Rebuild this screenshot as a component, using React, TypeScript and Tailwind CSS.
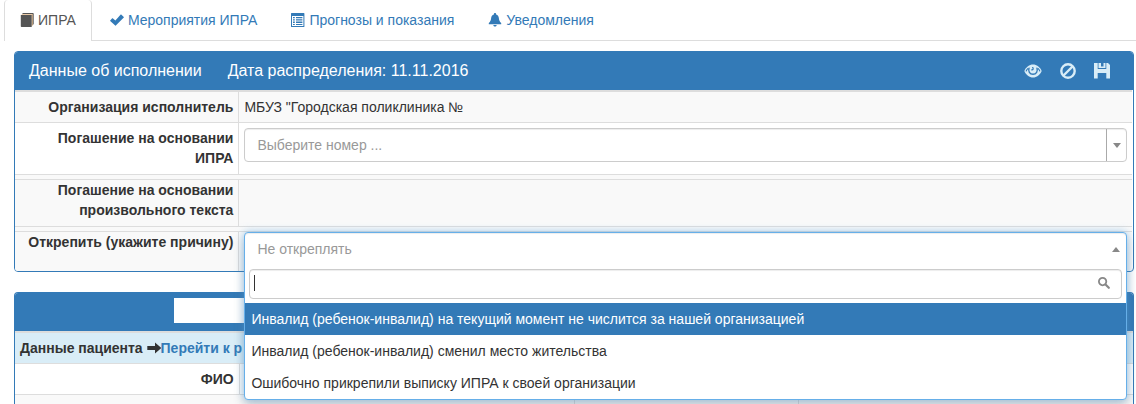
import React, { useState } from "react";

const BookIcon = () => (
  <svg viewBox="0 0 14 14" className="h-3.5 w-3.5" aria-hidden="true">
    <path fill="#e3b98a" d="M2 1.200h11V12l-1.400 1.400V2.200H1.400z" />
    <path fill="currentColor" d="M3 0h10a.7.7 0 0 1 .7.7V11l-1 1.200V1H2z" />
    <path fill="currentColor" d="M.8 2h10.900v12H1.600a.8.8 0 0 1-.8-.8z" />
  </svg>
);

const CheckIcon = () => (
  <svg viewBox="0 0 14 14" className="h-3.5 w-3.5" aria-hidden="true">
    <path fill="currentColor" d="M11.2 1.5l2.600 2.500a.4.4 0 0 1 0 .5l-8 8a.4.4 0 0 1-.6 0L.2 7.900a.4.4 0 0 1 0-.5l2-2.100a.4.4 0 0 1 .5 0l2.700 2.200 5.300-6a.4.4 0 0 1 .5 0z" />
  </svg>
);

const ListIcon = () => (
  <svg viewBox="0 0 14 14" className="h-3.5 w-3.5" aria-hidden="true">
    <path fill="currentColor" fillRule="evenodd" d="M.6 0h12.2a.6.6 0 0 1 .6.6v12.8a.6.6 0 0 1-.6.6H.6a.6.6 0 0 1-.6-.6V.6A.6.6 0 0 1 .6 0zM1 3v10h11.4V3z" />
    <path fill="currentColor" d="M2 4h1.8v1.3H2zM5 4h6.4v1.3H5zM2 6.3h1.8v1.3H2zM5 6.3h6.4v1.3H5zM2 8.6h1.8v1.3H2zM5 8.6h6.4v1.3H5zM2 10.9h1.8v1.2H2zM5 10.9h6.4v1.2H5z" />
  </svg>
);

const BellIcon = () => (
  <svg viewBox="0 0 14 14" className="h-3.5 w-3.5" aria-hidden="true">
    <path fill="currentColor" d="M7 0c.7 0 1.1.5 1.1 1.100v.3c1.700.5 2.500 1.700 2.700 3.300.3 2.500.8 4 2.400 5.300v1.300H.8V10c1.600-1.300 2.100-2.800 2.400-5.300C3.400 3.100 4.200 1.900 5.900 1.400v-.3C5.900.5 6.300 0 7 0zM5.300 12h3.400C8.500 13 7.900 13.600 7 13.600S5.500 13 5.300 12z" />
  </svg>
);

const EyeIcon = () => (
  <svg viewBox="0 0 18 16" className="h-4 w-[18px]" aria-hidden="true">
    <path fill="currentColor" d="M9 1.500c3.700 0 6.900 2.600 8.700 6.500-1.800 3.900-5 6.500-8.700 6.500S2.100 11.900.3 8C2.100 4.100 5.300 1.500 9 1.500z" />
    <g fill="none" stroke="#337ab7" strokeLinecap="round">
      <path strokeWidth="1.400" d="M5 5.200c-1 2.900.6 6 4 6s5-3.100 4-6" />
      <path strokeWidth="1.100" d="M3.800 5.600C3 6.400 2.500 7.200 2.200 8M14.200 5.600c.8.8 1.300 1.600 1.600 2.400" />
      <path strokeWidth="1.200" d="M8.600 4.600c1 .6.8 2.300-.9 2.200" />
    </g>
  </svg>
);

const BanIcon = () => (
  <svg viewBox="0 0 16 16" className="h-4 w-4" aria-hidden="true">
    <circle cx="8" cy="8" r="6.700" fill="none" stroke="currentColor" strokeWidth="2.400" />
    <path stroke="currentColor" strokeWidth="2.400" d="M3.500 12.500l9-9" />
  </svg>
);

const SaveIcon = () => (
  <svg viewBox="0 0 16 16" className="h-4 w-4" aria-hidden="true">
    <path fill="currentColor" fillRule="evenodd" d="M0 0h3.700v6h8.600V0H14l2 2v13.500h-3.700V10H3.700v5.500H0zM9.500 0h2v5h-7V0H7v3.500h2.500z" />
  </svg>
);

const SearchIcon = () => (
  <svg viewBox="0 0 12 12" className="h-3 w-3" aria-hidden="true">
    <circle cx="4.600" cy="4.600" r="3.700" fill="none" stroke="currentColor" strokeWidth="1.800" />
    <path stroke="currentColor" strokeWidth="2.200" strokeLinecap="round" d="M7.800 7.800l3 3" />
  </svg>
);

const ArrowIcon = () => (
  <svg viewBox="0 0 14 12" className="h-3 w-3.5" aria-hidden="true">
    <path fill="currentColor" d="M8 .4l5.800 5.200a.5.5 0 0 1 0 .8L8 11.600V8H.3V4H8z" />
  </svg>
);

const Caret = ({ up }: { up?: boolean }) => (
  <svg viewBox="0 0 8 5" className="h-[5px] w-2 text-[#888]" aria-hidden="true">
    <path fill="currentColor" d={up ? "M0 5l4-5 4 5z" : "M0 0h8L4 5z"} />
  </svg>
);

const tabs = [
  { id: "ipra", title: "ИПРА", icon: <BookIcon /> },
  { id: "events", title: "Мероприятия ИПРА", icon: <CheckIcon /> },
  { id: "forecast", title: "Прогнозы и показания", icon: <ListIcon /> },
  { id: "notices", title: "Уведомления", icon: <BellIcon /> },
];

const reasons = [
  "Инвалид (ребенок-инвалид) на текущий момент не числится за нашей организацией",
  "Инвалид (ребенок-инвалид) сменил место жительства",
  "Ошибочно прикрепили выписку ИПРА к своей организации",
];

const labelCell = "w-1/5 px-[5px] text-right align-top font-bold";
const valueCell = "border-l border-[#ddd] px-[5px] align-top";

const ReasonSelect = () => {
  const [open, setOpen] = useState(true);
  const [value, setValue] = useState("");
  const [search, setSearch] = useState("");
  const [active, setActive] = useState(0);

  const found = reasons.filter((r) => r.toLowerCase().includes(search.toLowerCase()));

  return (
    <div className="relative h-[39px]">
      <div className="absolute inset-x-0 top-0 z-10 rounded border border-[#66afe9] bg-white shadow-[0_0_8px_rgba(102,175,233,0.6),0_6px_12px_rgba(0,0,0,0.175)]">
        <button
          id="reason"
          type="button"
          aria-expanded={open}
          onClick={() => setOpen(!open)}
          className="flex h-8 w-full items-center justify-between rounded-t pr-1.5 pl-3 text-left text-[#999] shadow-[inset_0_1px_1px_rgba(0,0,0,0.075)]"
        >
          {value || "Не откреплять"}
          <Caret up={open} />
        </button>
        {open && (
          <div>
            <div className="relative px-1 py-1">
              <input
                type="text"
                aria-label="Поиск"
                value={search}
                onChange={(e) => setSearch(e.target.value)}
                className="block h-[30px] w-full rounded border border-[#ccc] pr-8 pl-1 caret-transparent shadow-[inset_0_1px_1px_rgba(0,0,0,0.075)] outline-none"
              />
              {search === "" && <span className="absolute top-2.5 left-[9px] h-4 w-px bg-[#333]" />}
              <span className="absolute top-3 right-4 text-[#888]">
                <SearchIcon />
              </span>
            </div>
            <ul role="listbox" aria-label="Причина">
              {found.map((r, i) => (
                <li
                  key={r}
                  role="option"
                  aria-selected={i === active}
                  onMouseEnter={() => setActive(i)}
                  onClick={() => {
                    setValue(r);
                    setOpen(false);
                  }}
                  className={`cursor-pointer px-1.5 py-1.5 last:rounded-b ${i === active ? "bg-[#337ab7] text-white" : ""}`}
                >
                  {r}
                </li>
              ))}
            </ul>
          </div>
        )}
      </div>
    </div>
  );
};

const App = () => {
  const [tab, setTab] = useState("ipra");
  const [number, setNumber] = useState("");

  return (
    <div className="bg-white font-['Liberation_Sans',Arial,sans-serif] text-sm leading-5 text-[#333]">
      <nav className="ml-1 flex gap-0.5 border-b border-[#ddd]">
        {tabs.map((t) => (
          <a
            key={t.id}
            href={`#${t.id}`}
            onClick={() => setTab(t.id)}
            className={`-mb-px flex items-center gap-1 border-x px-[15px] pt-2.5 pb-[11px] ${
              t.id === tab ? "rounded-t border-[#ddd] bg-white text-[#555]" : "border-transparent text-[#337ab7]"
            }`}
          >
            {t.icon}
            {t.title}
          </a>
        ))}
      </nav>

      <main className="flex flex-col gap-5 pt-2.5 pr-0.5 pl-3.5">
        <section className="rounded border border-[#337ab7]">
          <header className="flex h-[38px] items-center justify-between rounded-t-[3px] bg-[#337ab7] pr-[23px] pl-3.5 text-base text-white">
            <div className="flex gap-[26px]">
              <h2>Данные об исполнении</h2>
              <span>Дата распределения: 11.11.2016</span>
            </div>
            <div className="flex gap-[18px] text-[#d9edf7]">
              <button type="button" aria-label="Просмотр">
                <EyeIcon />
              </button>
              <button type="button" aria-label="Отменить">
                <BanIcon />
              </button>
              <button type="button" aria-label="Сохранить">
                <SaveIcon />
              </button>
            </div>
          </header>
          <div className="pr-px">
            <table className="w-full table-fixed border-separate border-spacing-0 border-t-2 border-[#ddd]">
              <tbody>
                <tr className="bg-[#f9f9f9]">
                  <th scope="row" className={`${labelCell} py-[5px]`}>Организация исполнитель</th>
                  <td className={`${valueCell} py-[5px]`}>МБУЗ "Городская поликлиника №</td>
                </tr>
                <tr>
                  <th scope="row" className={`${labelCell} border-t border-[#ddd] pt-[5px] pb-1.5`}>
                    <label htmlFor="number">Погашение на основании ИПРА</label>
                  </th>
                  <td className={`${valueCell} border-t pt-[5px]`}>
                    <div className="relative">
                      <select
                        id="number"
                        value={number}
                        onChange={(e) => setNumber(e.target.value)}
                        className="block h-[34px] w-full appearance-none rounded border border-[#ccc] bg-white px-3 text-[#999] shadow-[inset_0_1px_1px_rgba(0,0,0,0.075)]"
                      >
                        <option value="">Выберите номер ...</option>
                      </select>
                      <span className="pointer-events-none absolute inset-y-px right-px flex w-5 items-center justify-center border-l border-[#aaa]">
                        <Caret />
                      </span>
                    </div>
                  </td>
                </tr>
                <tr className="bg-[#f9f9f9]">
                  <td colSpan={2} className="h-[5px] border-t border-[#ddd] p-0" />
                </tr>
                <tr className="bg-[#f9f9f9]">
                  <th scope="row" className={`${labelCell} border-t border-[#ddd] pb-1.5`}>
                    Погашение на основании произвольного текста
                  </th>
                  <td className={`${valueCell} border-t`} />
                </tr>
                <tr className="bg-[#f9f9f9]">
                  <td colSpan={2} className="h-[5px] border-t border-[#ddd] p-0" />
                </tr>
                <tr>
                  <th scope="row" className={`${labelCell} rounded-bl-[3px] border-t border-[#ddd] bg-[#f9f9f9] whitespace-nowrap`}>
                    <label htmlFor="reason">Открепить (укажите причину)</label>
                  </th>
                  <td className={`${valueCell} rounded-br-[3px] border-t bg-[#f9f9f9]`}>
                    <ReasonSelect />
                  </td>
                </tr>
              </tbody>
            </table>
          </div>
        </section>

        <section className="rounded-t border border-b-0 border-[#337ab7]">
          <header className="flex h-[38px] items-start rounded-t-[3px] bg-[#337ab7] pt-[5px]">
            <div className="ml-[159px] h-[25px] w-60 bg-white" />
          </header>
          <table className="w-full table-fixed border-separate border-spacing-0 border-t-2 border-[#ddd]">
            <colgroup>
              <col className="w-[20%]" />
              <col className="w-[30%]" />
              <col className="w-[20%]" />
              <col className="w-[30%]" />
            </colgroup>
            <tbody>
              <tr className="bg-[#d9edf7]">
                <th colSpan={4} className="p-[5px] text-left">
                  <span className="flex items-center">
                    Данные пациента&nbsp;
                    <ArrowIcon />
                    <a href="#registry" className="text-[#337ab7]">Перейти к р</a>
                  </span>
                </th>
              </tr>
              <tr>
                <th scope="row" className="border-t border-[#ddd] p-[5px] text-right">ФИО</th>
                <td colSpan={3} className="border-t border-l border-[#ddd] p-[5px]" />
              </tr>
              <tr className="h-[10px] bg-[#f9f9f9]">
                <td colSpan={2} className="border-t border-[#ddd]" />
                <td className="border-t border-l border-[#ddd]" />
                <td className="border-t border-l border-[#ddd]" />
              </tr>
            </tbody>
          </table>
        </section>
      </main>
    </div>
  );
};

export default App;
